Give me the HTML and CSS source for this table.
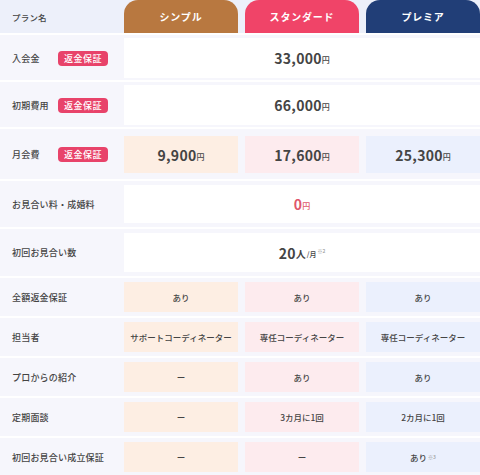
FILE: index.html
```html
<!DOCTYPE html>
<html lang="ja">
<head>
<meta charset="utf-8">
<link rel="stylesheet" href="styles.css">
</head>
<body>
<div class="table">
  <div class="row head">
    <div class="label">プラン名</div>
    <div class="tab simple">シンプル</div>
    <div class="tab standard">スタンダード</div>
    <div class="tab premier">プレミア</div>
  </div>

  <div class="row r1">
    <div class="label"><span class="ltxt">入会金</span><span class="badge">返金保証</span></div>
    <div class="cell merged"><span class="num">33,000</span><span class="yen">円</span></div>
  </div>

  <div class="row r2">
    <div class="label"><span class="ltxt">初期費用</span><span class="badge">返金保証</span></div>
    <div class="cell merged"><span class="num">66,000</span><span class="yen">円</span></div>
  </div>

  <div class="row r3">
    <div class="label"><span class="ltxt">月会費</span><span class="badge">返金保証</span></div>
    <div class="cell c-s"><span class="num">9,900</span><span class="yen">円</span></div>
    <div class="cell c-t"><span class="num">17,600</span><span class="yen">円</span></div>
    <div class="cell c-p"><span class="num">25,300</span><span class="yen">円</span></div>
  </div>

  <div class="row r4">
    <div class="label">お見合い料・成婚料</div>
    <div class="cell merged"><span class="num red">0</span><span class="yen red">円</span></div>
  </div>

  <div class="row r5">
    <div class="label">初回お見合い数</div>
    <div class="cell merged"><span class="num">20</span><span class="unit">人</span><span class="unit-s">/月</span><sup class="note big">※2</sup></div>
  </div>

  <div class="row sm">
    <div class="label">全額返金保証</div>
    <div class="cell c-s">あり</div>
    <div class="cell c-t">あり</div>
    <div class="cell c-p">あり</div>
  </div>

  <div class="row sm">
    <div class="label">担当者</div>
    <div class="cell c-s">サポートコーディネーター</div>
    <div class="cell c-t">専任コーディネーター</div>
    <div class="cell c-p">専任コーディネーター</div>
  </div>

  <div class="row sm">
    <div class="label">プロからの紹介</div>
    <div class="cell c-s">ー</div>
    <div class="cell c-t">あり</div>
    <div class="cell c-p">あり</div>
  </div>

  <div class="row sm">
    <div class="label">定期面談</div>
    <div class="cell c-s">ー</div>
    <div class="cell c-t">3カ月に1回</div>
    <div class="cell c-p">2カ月に1回</div>
  </div>

  <div class="row sm">
    <div class="label">初回お見合い成立保証</div>
    <div class="cell c-s">ー</div>
    <div class="cell c-t">ー</div>
    <div class="cell c-p">あり<sup class="note">※3</sup></div>
  </div>
</div>
</body>
</html>
```
FILE: styles.css
```css
* { box-sizing: border-box; }
html, body { margin: 0; padding: 0; background: #ffffff; }
body {
  font-family: "Noto Sans CJK JP", "Noto Sans", sans-serif;
  color: #444444;
  width: 480px;
  height: 475px;
  overflow: hidden;
}
.table {
  display: flex;
  flex-direction: column;
  gap: 2px;
}
.row {
  display: grid;
  grid-template-columns: 117px 1fr 1fr 1fr;
  column-gap: 7px;
  background: #f6f6fc;
  padding: 4px 0;
  align-items: stretch;
}
.row.head {
  background: #edf0fa;
  padding: 0;
  height: 33px;
}
.row.r1, .row.r2 { height: 45px; padding: 3px 0 2px; }
.row.r3 { height: 50px; padding: 7px 0 6px; }
.row.r4 { height: 46px; padding: 4px 0 4px; }
.row.r5 { height: 47px; padding: 4px 0 4px; }
.row.sm { height: 38px; padding: 4px 0 4px; }

.label {
  display: flex;
  align-items: center;
  padding-left: 12px;
  font-size: 9px;
  font-weight: 500;
  color: #444;
  letter-spacing: 0.2px;
  white-space: nowrap;
}
.head .label { font-size: 8.5px; }
.ltxt {
  display: inline-block;
  width: 46px;
}
.badge {
  background: #e8436a;
  color: #fff;
  font-size: 9px;
  font-weight: 500;
  border-radius: 4px;
  width: 50px;
  height: 15px;
  display: inline-flex;
  align-items: center;
  justify-content: center;
  letter-spacing: 0.5px;
}

.tab {
  display: flex;
  align-items: center;
  justify-content: center;
  border-radius: 14px 14px 0 0;
  color: #fff;
  font-size: 10px;
  font-weight: 700;
  letter-spacing: 0.8px;
}
.tab.simple { background: #b87840; }
.tab.standard { background: #f04468; }
.tab.premier { background: #213e77; }

.cell {
  display: flex;
  align-items: center;
  justify-content: center;
  font-size: 8.5px;
  font-weight: 500;
  color: #444;
}
.merged {
  grid-column: 2 / 5;
  background: #ffffff;
}
.c-s { background: #fdeee3; }
.c-t { background: #fdebee; }
.c-p { background: #ebf0fd; }

.num {
  font-size: 14px;
  font-weight: 700;
  letter-spacing: 0.3px;
  color: #444;
}
.yen {
  font-size: 8px;
  font-weight: 500;
  margin-top: 3px;
}
.red { color: #e0566c; }
.unit {
  font-size: 10px;
  font-weight: 600;
  margin-top: 2px;
}
.unit-s {
  font-size: 7px;
  margin-top: 3px;
  margin-left: 1px;
}
.note {
  font-size: 5px;
  color: #999;
  margin-left: 1px;
  align-self: flex-start;
  margin-top: 11px;
}
.note.big { margin-top: 14px; }
```
